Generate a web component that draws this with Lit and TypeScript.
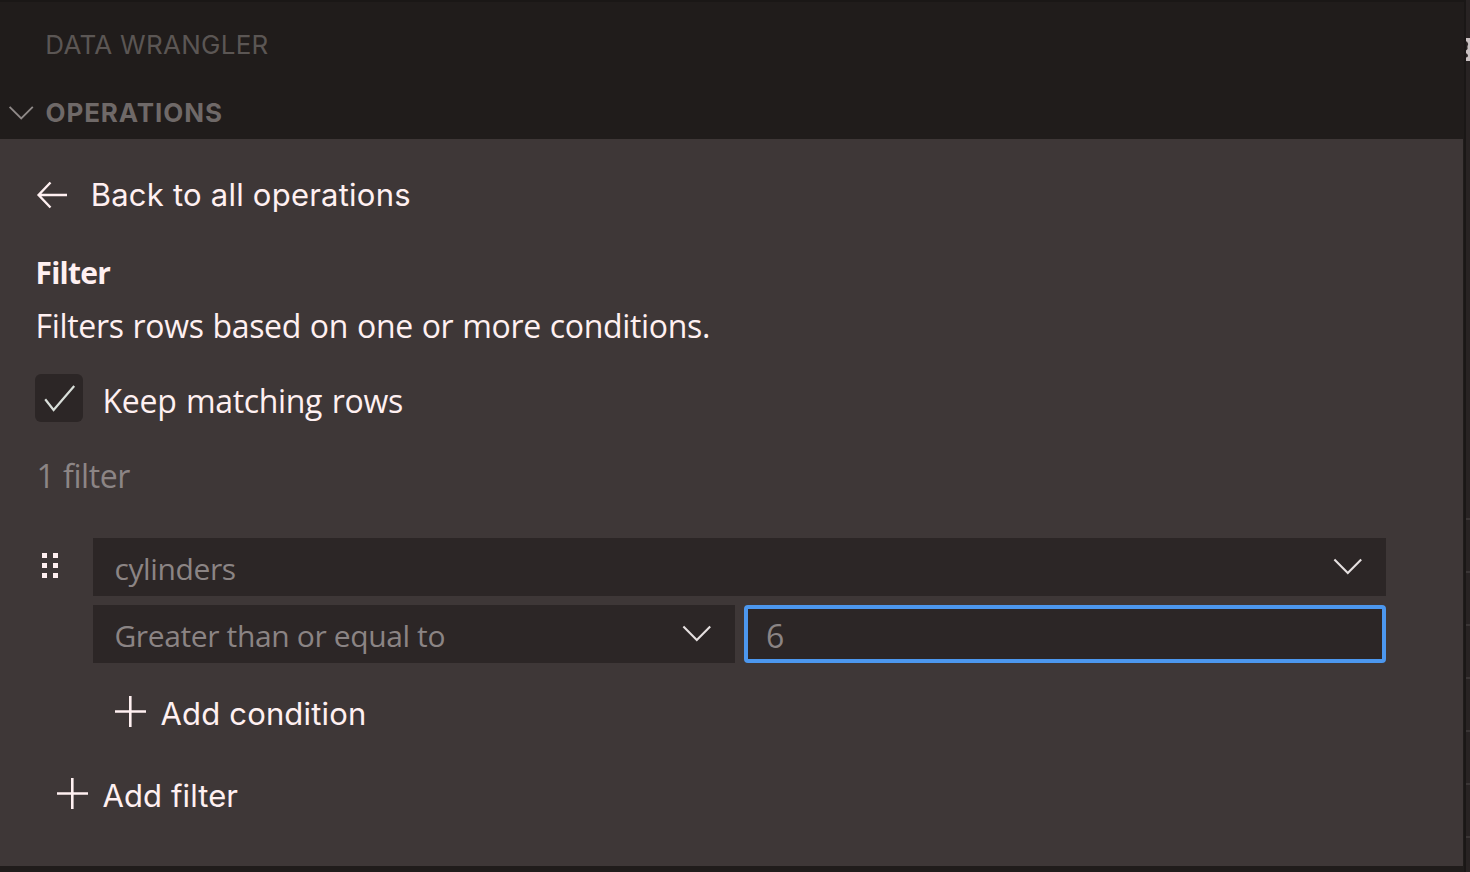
import { LitElement, html, css, svg } from "lit";
import { customElement, property, state } from "lit/decorators.js";

const ICONS = {
  chevronSmall: { w: 26, h: 16, sw: 1.9, d: "M1.6 1.8 L13.2 13.3 L24.8 1.8" },
  chevron: { w: 30, h: 18, sw: 2.1, d: "M1.4 1.5 L14.8 15.1 L28.2 1.5" },
  back: { w: 32, h: 28, sw: 2.4, d: "M15.5 1.5 L3.6 14 L15.5 26.5 M3.6 14 H32" },
  plus: { w: 32, h: 32, sw: 2.6, d: "M16.3 1 V32 M1 16.5 H32" },
  check: { w: 48, h: 48, sw: 2.2, d: "M10.2 25.2 L18.6 36 L39.2 12" },
};

@customElement("line-icon")
class LineIcon extends LitElement {
  static styles = css`
    :host {
      display: block;
      flex: none;
    }
    .glyph {
      display: block;
      fill: none;
      stroke: currentColor;
    }
  `;

  @property() name: keyof typeof ICONS = "chevron";

  render() {
    const i = ICONS[this.name];
    return html`<svg class="glyph" width=${i.w} height=${i.h} viewBox="0 0 ${i.w} ${i.h}">
      ${svg`<path d=${i.d} stroke-width=${i.sw} />`}
    </svg>`;
  }
}

@customElement("select-field")
class SelectField extends LitElement {
  static styles = css`
    :host {
      display: flex;
      box-sizing: border-box;
      height: 58px;
      justify-content: space-between;
      align-items: flex-start;
      padding: 10px 23px 0 21.4px;
      background: #2c2626;
      color: #8b8484;
      font: 400 30px/41px "Open Sans", "Noto Sans", sans-serif;
      letter-spacing: -0.37px;
      white-space: nowrap;
    }
    .arrow {
      margin-top: 10px;
      color: #e6e0e0;
    }
  `;

  @property() value = "";

  render() {
    return html`<span>${this.value}</span><line-icon class="arrow" name="chevron"></line-icon>`;
  }
}

@customElement("app-root")
class AppRoot extends LitElement {
  static styles = css`
    :host {
      display: block;
    }
    .window {
      display: flex;
      box-sizing: border-box;
      width: 1470px;
      height: 872px;
      overflow: hidden;
      background: #1a1716;
      color: #fff0f1;
      font: 400 32px/41px "Open Sans", "Noto Sans", sans-serif;
      white-space: nowrap;
    }
    .sidebar {
      display: flex;
      flex-direction: column;
      width: 1464px;
      box-sizing: border-box;
      border-top: 2px solid #1a1716;
      background: #201c1b;
    }
    .ui {
      font-family: Inter, Roboto, sans-serif;
    }
    .title {
      margin: 22px 0 0 45.3px;
      font-size: 26px;
      letter-spacing: 0.27px;
      color: #5b5654;
    }
    .section {
      display: flex;
      height: 47px;
      margin-top: 27px;
      padding-left: 8px;
      font-size: 26px;
      font-weight: 700;
      letter-spacing: 0.9px;
      color: #6f6968;
    }
    .section line-icon {
      margin: 13px 11.5px 0 0;
      color: #8f8988;
    }
    .panel {
      width: 1463px;
      height: 727px;
      box-sizing: border-box;
      padding: 35px 77px 0 35px;
      background: #3e3737;
    }
    .back {
      display: flex;
      gap: 23px;
      font-size: 31px;
      letter-spacing: 0.23px;
    }
    .back line-icon {
      margin-top: 7px;
    }
    .back span {
      margin-left: 0.7px;
    }
    .name {
      margin: 37px 0 0 0.5px;
      font-size: 30px;
      font-weight: 700;
      letter-spacing: -0.75px;
      line-height: 41px;
    }
    .about {
      margin: 12px 0 0 0.6px;
      letter-spacing: -0.33px;
      word-spacing: 0.9px;
    }
    .keep {
      display: flex;
      gap: 19.6px;
      margin-top: 28px;
    }
    .box {
      width: 48px;
      height: 48px;
      border-radius: 6px;
      background: #2c2626;
      color: #d9dfda;
    }
    .keep span {
      margin-top: 6px;
      letter-spacing: -0.33px;
      word-spacing: 1.6px;
    }
    .count {
      margin: 33px 0 0 1.5px;
      letter-spacing: -0.45px;
      word-spacing: 0.9px;
      color: #8c8585;
    }
    .rule {
      display: grid;
      grid-template-columns: 58px 1fr;
      margin-top: 42px;
    }
    .grip {
      display: grid;
      grid-template-columns: 5px 5px;
      grid-auto-rows: 5px;
      gap: 5px 6px;
      margin: 15px 0 0 7px;
    }
    .dot {
      background: #fff0f1;
    }
    .fields {
      display: grid;
      grid-template-columns: 1fr 1fr;
      gap: 9px;
    }
    .wide {
      grid-column: 1 / 3;
    }
    .value {
      box-sizing: border-box;
      height: 58px;
      padding: 6px 18px 0;
      border: 4px solid #4c97ee;
      border-radius: 4px;
      background: #2c2626;
      color: #8b8484;
    }
    .add {
      display: flex;
      gap: 14.5px;
      font-size: 31px;
    }
    .add line-icon {
      margin-top: 2px;
    }
    .condition {
      margin: 30px 0 0 79px;
      letter-spacing: 0.17px;
    }
    .filter {
      margin: 41px 0 0 21px;
      letter-spacing: 0.1px;
    }
    .editor {
      display: flex;
      flex-direction: column;
      width: 4px;
      margin-left: 2px;
      background: #282323;
    }
    .sliver {
      display: block;
      flex: none;
      margin-top: 37px;
    }
    .rows {
      margin-top: 457px;
    }
    .row {
      height: 51px;
      border-top: 2px solid #3a3535;
    }
  `;

  @state() private column = "cylinders";
  @state() private operator = "Greater than or equal to";
  @state() private operand = "6";

  render() {
    return html`
      <div class="window">
        <div class="sidebar">
          <div class="title ui">DATA WRANGLER</div>
          <div class="section ui">
            <line-icon name="chevronSmall"></line-icon><span>OPERATIONS</span>
          </div>
          <div class="panel">
            <div class="back ui">
              <line-icon name="back"></line-icon><span>Back to all operations</span>
            </div>
            <div class="name">Filter</div>
            <div class="about">Filters rows based on one or more conditions.</div>
            <div class="keep">
              <div class="box"><line-icon name="check"></line-icon></div>
              <span>Keep matching rows</span>
            </div>
            <div class="count">1 filter</div>
            <div class="rule">
              <div class="grip">${[0, 1, 2, 3, 4, 5].map(() => html`<i class="dot"></i>`)}</div>
              <div class="fields">
                <select-field class="wide" .value=${this.column}></select-field>
                <select-field .value=${this.operator}></select-field>
                <div class="value">${this.operand}</div>
              </div>
            </div>
            <div class="add condition ui">
              <line-icon name="plus"></line-icon><span>Add condition</span>
            </div>
            <div class="add filter ui">
              <line-icon name="plus"></line-icon><span>Add filter</span>
            </div>
          </div>
        </div>
        <div class="editor">
          <svg class="sliver" width="4" height="24" viewBox="0 0 4 24">
            <path
              fill="#c9c0c1"
              d="M0 1 H4 V24 H0 V20.5 L1.6 20 L2 18 L0 16 V13.5 L1.6 12 L1.4 9.5 L2.2 7 L1 4.5 H0 Z"
            />
          </svg>
          <div class="rows">${[0, 1, 2, 3, 4, 5, 6].map(() => html`<div class="row"></div>`)}</div>
        </div>
      </div>
    `;
  }
}
